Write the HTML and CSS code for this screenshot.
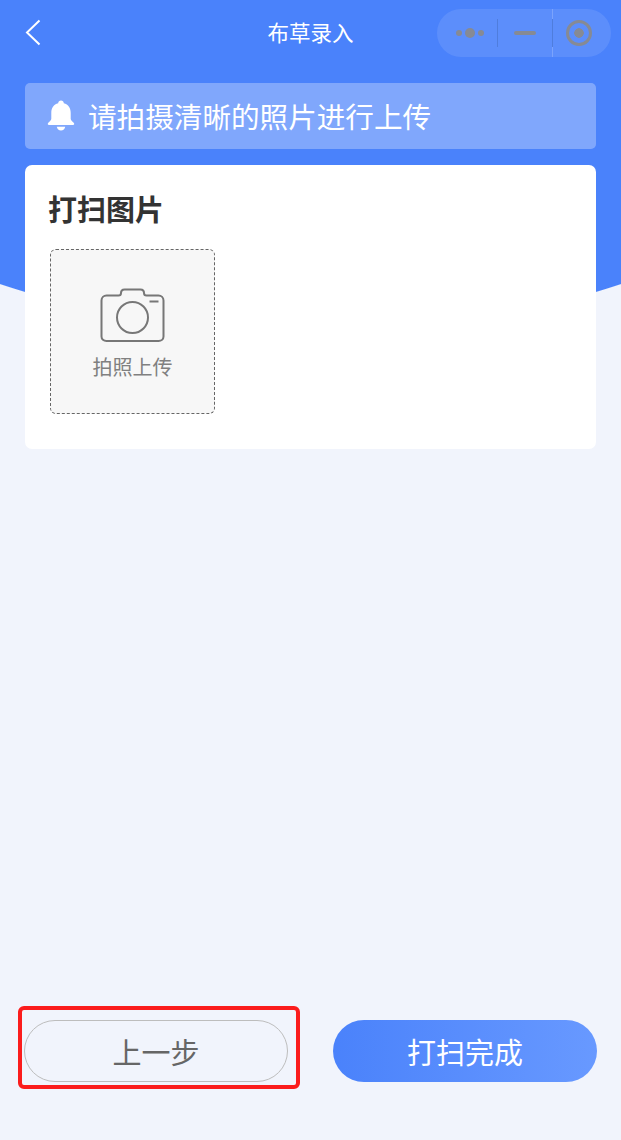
FILE: index.html
```html
<!DOCTYPE html>
<html lang="zh-CN">
<head>
    <meta charset="UTF-8">
    <meta name="viewport" content="width=device-width, initial-scale=1.0">
    <title>布草录入</title>
    <link rel="stylesheet" href="styles.css">
</head>
<body>
    <div class="page">
        <header class="nav">
            <svg class="back" width="16" height="27" viewBox="0 0 16 27">
                <path d="M14.5 1.5 2 13.5 14.5 25.5" fill="none" stroke="#fff" stroke-width="2"/>
            </svg>
            <h1 class="nav-title">布草录入</h1>
            <div class="capsule">
                <div class="capsule-cell capsule-more">
                    <span class="dot"></span><span class="dot dot-big"></span><span class="dot"></span>
                </div>
                <div class="capsule-cell capsule-min"><span class="dash"></span></div>
                <div class="capsule-cell capsule-close"><span class="ring"></span></div>
            </div>
        </header>

        <div class="notice">
            <svg class="bell" width="28" height="31" viewBox="0 0 28 31">
                <path d="M14 0.5c1.600 0 2.700 1.100 2.800 2.700 4.600 1.100 6.900 4.800 6.900 9.500v6.100c0 1.500 1.500 2.700 3 3.900.9.8.7 2.300-.8 2.300H2.100c-1.500 0-1.700-1.500-.8-2.300 1.500-1.200 3-2.400 3-3.900v-6.100c0-4.700 2.300-8.400 6.900-9.500.1-1.600 1.200-2.700 2.800-2.700z" fill="#fff"/>
                <path d="M9.800 26.800h8.400c-.3 2.300-2 3.700-4.200 3.700s-3.900-1.400-4.200-3.700z" fill="#fff"/>
            </svg>
            <span class="notice-text">请拍摄清晰的照片进行上传</span>
        </div>

        <section class="card">
            <h2 class="card-title">打扫图片</h2>
            <div class="upload">
                <svg class="camera" width="65" height="55" viewBox="0 0 65 55">
                    <path d="M6.500 7.500h12c1.500 0 2.500-1 2.500-2.500 0-2 1.500-3.500 3.500-3.500h16c2 0 3.500 1.500 3.500 3.500 0 1.500 1 2.500 2.500 2.500h12c2.800 0 5 2.200 5 5v36c0 2.800-2.200 4.500-5 4.500h-52c-2.800 0-5-1.700-5-4.500v-36c0-2.800 2.200-5 5-5z" fill="none" stroke="#777" stroke-width="2"/>
                    <circle cx="32.500" cy="29.500" r="15.500" fill="none" stroke="#777" stroke-width="2"/>
                    <path d="M49.500 13.500h9" fill="none" stroke="#777" stroke-width="2"/>
                </svg>
                <span class="upload-text">拍照上传</span>
            </div>
        </section>

        <footer class="actions">
            <div class="btn btn-prev">上一步
                <span class="mark"></span>
            </div>
            <div class="btn btn-done">打扫完成</div>
        </footer>
    </div>
</body>
</html>
```

FILE: styles.css
```css
body {
    margin: 0;
    font-family: "Noto Sans CJK SC", "Liberation Sans", sans-serif;
    background-color: #f1f4fc;
    background-image: radial-gradient(circle at 50% -656px, #4a82fb 989.5px, #f1f4fc 990.5px);
}

.page {
    display: flex;
    flex-direction: column;
    height: 100vh;
    box-sizing: border-box;
    padding-bottom: 58px;
}

/* top bar */
.nav {
    display: grid;
    grid-template-columns: 1fr auto 1fr;
    align-items: center;
    height: 48px;
    padding: 9px 10px 26px;
}

.back {
    display: block;
    margin: -1px 0 0 15px;
}

.nav-title {
    margin: -2px 0 0;
    color: white;
    font-size: 21.500px;
    font-weight: 400;
    line-height: 48px;
}

.capsule {
    justify-self: end;
    display: flex;
    width: 174px;
    height: 48px;
    border-radius: 24px;
    background: rgba(255, 255, 255, 0.1);
}

.capsule-cell {
    display: flex;
    align-items: center;
    justify-content: center;
}

.capsule-more {
    width: 60px;
    gap: 3px;
    padding-left: 6px;
    box-sizing: border-box;
}

.capsule-min {
    width: 55px;
    height: 28px;
    align-self: center;
    box-sizing: border-box;
    border-left: 1px solid #4f7ddd;
}

.capsule-close {
    flex: 1;
    padding-right: 5px;
    background:
        linear-gradient(#4f7ddd, #4f7ddd) 0 50% / 1px 28px no-repeat,
        linear-gradient(#7ba3fc, #7ba3fc) 0 0 / 1px 100% no-repeat;
}

.dot {
    width: 6px;
    height: 6px;
    border-radius: 50%;
    background: #868a94;
}

.dot-big {
    width: 10px;
    height: 10px;
}

.dash {
    width: 22px;
    height: 4px;
    border-radius: 2px;
    background: #868a94;
}

.ring {
    width: 20px;
    height: 20px;
    border: 3px solid #868a94;
    border-radius: 50%;
    background: radial-gradient(circle, #868a94 4.500px, transparent 5px);
}

/* notice */
.notice {
    display: flex;
    align-items: center;
    gap: 13px;
    height: 66px;
    margin: 0 25px;
    padding-left: 22px;
    border-radius: 5px;
    background: rgba(255, 255, 255, 0.3);
}

.bell {
    flex: none;
    margin-top: -2px;
}

.notice-text {
    color: white;
    font-size: 28.600px;
    line-height: 40px;
}

/* card */
.card {
    height: 284px;
    box-sizing: border-box;
    margin: 16px 25px 0;
    padding: 23px 25px;
    border-radius: 7px;
    background: white;
}

.card-title {
    margin: 0 0 20px -2px;
    color: #333;
    font-size: 29px;
    font-weight: 700;
    line-height: 41px;
}

.upload {
    display: flex;
    flex-direction: column;
    align-items: center;
    width: 165px;
    height: 165px;
    box-sizing: border-box;
    padding-top: 38px;
    border: 1px dashed #666;
    border-radius: 6px;
    background: #f7f7f7;
}

.camera {
    display: block;
}

.upload-text {
    margin-top: 9px;
    color: #808080;
    font-size: 20px;
    line-height: 30px;
}

/* bottom buttons */
.actions {
    display: flex;
    justify-content: space-between;
    margin-top: auto;
    padding: 0 24px;
}

.btn {
    position: relative;
    display: flex;
    align-items: center;
    justify-content: center;
    width: 264px;
    height: 62px;
    box-sizing: border-box;
    border-radius: 31px;
    font-size: 29px;
}

.btn-prev {
    border: 1px solid #bdbdbd;
    color: #666;
}

.btn-done {
    color: white;
    background: linear-gradient(to right, #4a82fb, #6899ff);
}

/* red marker drawn over the back button */
.mark {
    position: absolute;
    left: -7px;
    top: -15px;
    width: 282px;
    height: 83px;
    box-sizing: border-box;
    border: 4px solid #fb1c1c;
    border-radius: 6px;
}
```
